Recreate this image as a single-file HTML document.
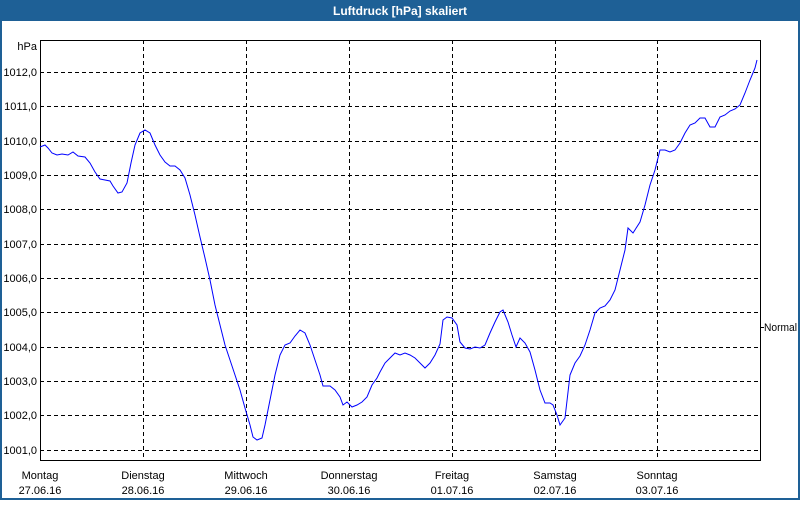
<!DOCTYPE html>
<html><head><style>
body{margin:0;width:800px;height:500px;overflow:hidden;background:#fff;font-family:"Liberation Sans","DejaVu Sans",sans-serif;}
</style></head><body>
<svg width="800" height="500" xmlns="http://www.w3.org/2000/svg" font-family="Liberation Sans, DejaVu Sans, sans-serif" font-size="11">
<rect x="0" y="0" width="800" height="500" fill="#fff"/>
<rect x="0" y="0" width="800" height="21" fill="#1e6096"/>
<rect x="0" y="0" width="2" height="500" fill="#1e6096"/>
<rect x="798" y="0" width="2" height="500" fill="#1e6096"/>
<rect x="0" y="498" width="800" height="2" fill="#1e6096"/>
<text x="400" y="15" fill="#fff" font-weight="bold" font-size="12" text-anchor="middle">Luftdruck [hPa] skaliert</text>
<g stroke="#000" stroke-dasharray="4,3" stroke-width="1">
<line x1="40" x2="760" y1="72.5" y2="72.5"/><line x1="40" x2="760" y1="106.5" y2="106.5"/>
<line x1="40" x2="760" y1="141.5" y2="141.5"/><line x1="40" x2="760" y1="175.5" y2="175.5"/>
<line x1="40" x2="760" y1="209.5" y2="209.5"/><line x1="40" x2="760" y1="244.5" y2="244.5"/>
<line x1="40" x2="760" y1="278.5" y2="278.5"/><line x1="40" x2="760" y1="312.5" y2="312.5"/>
<line x1="40" x2="760" y1="347.5" y2="347.5"/><line x1="40" x2="760" y1="381.5" y2="381.5"/>
<line x1="40" x2="760" y1="415.5" y2="415.5"/><line x1="40" x2="760" y1="450.5" y2="450.5"/>
<line x1="143.5" x2="143.5" y1="40" y2="460"/><line x1="246.5" x2="246.5" y1="40" y2="460"/>
<line x1="349.5" x2="349.5" y1="40" y2="460"/><line x1="452.5" x2="452.5" y1="40" y2="460"/>
<line x1="555.5" x2="555.5" y1="40" y2="460"/><line x1="657.5" x2="657.5" y1="40" y2="460"/>
</g>
<rect x="40.5" y="40.5" width="720" height="420" fill="none" stroke="#000"/>
<line x1="760" x2="764" y1="327.5" y2="327.5" stroke="#000"/>
<g fill="#000" text-anchor="end">
<text x="37" y="50">hPa</text>
<text x="37" y="76">1012,0</text><text x="37" y="110">1011,0</text><text x="37" y="145">1010,0</text>
<text x="37" y="179">1009,0</text><text x="37" y="213">1008,0</text><text x="37" y="248">1007,0</text>
<text x="37" y="282">1006,0</text><text x="37" y="316">1005,0</text><text x="37" y="351">1004,0</text>
<text x="37" y="385">1003,0</text><text x="37" y="419">1002,0</text><text x="37" y="454">1001,0</text>
</g>
<text x="764" y="331" fill="#000" textLength="33" lengthAdjust="spacingAndGlyphs">Normal</text>
<g fill="#000" text-anchor="middle">
<text x="40" y="479">Montag</text><text x="40" y="494">27.06.16</text>
<text x="143" y="479">Dienstag</text><text x="143" y="494">28.06.16</text>
<text x="246" y="479">Mittwoch</text><text x="246" y="494">29.06.16</text>
<text x="349" y="479">Donnerstag</text><text x="349" y="494">30.06.16</text>
<text x="452" y="479">Freitag</text><text x="452" y="494">01.07.16</text>
<text x="555" y="479">Samstag</text><text x="555" y="494">02.07.16</text>
<text x="657" y="479">Sonntag</text><text x="657" y="494">03.07.16</text>
</g>
<polyline fill="none" stroke="#0000ff" stroke-width="1" points="40,147 45,145 48,148 52,153 57,155 62,154 68,155 73,152 78,156 85,157 90,163 95,172 100,179 105,180 110,181 113,186 118,193 122,192 127,183 131,163 135,145 140,133 145,130 150,133 155,145 160,155 165,162 170,166 175,166 180,170 185,178 190,195 195,215 200,237 205,258 210,280 215,305 220,325 225,345 230,360 235,375 240,390 245,408 250,425 253,437 257,440 262,438 265,425 270,400 275,375 280,355 285,345 290,343 295,336 300,330 305,333 310,345 315,360 320,375 323,386 330,386 335,390 340,397 343,405 347,402 352,407 357,405 362,402 367,397 372,385 377,378 380,372 385,363 390,358 395,353 400,355 405,353 410,355 415,358 420,363 425,368 430,363 435,355 440,344 443,320 447,317 452,318 457,325 460,342 465,348 470,349 475,347 480,348 485,345 490,333 495,322 500,312 503,310 508,322 512,335 516,347 520,338 525,343 530,352 535,370 540,390 545,403 550,403 553,405 557,415 560,425 565,418 570,375 575,363 580,356 585,345 590,330 595,313 600,308 605,306 610,300 615,290 620,270 625,250 628,228 633,233 640,222 645,205 650,185 655,170 660,150 665,150 670,152 675,150 680,143 685,133 690,125 695,123 700,118 705,118 710,127 715,127 720,117 725,115 730,111 735,109 740,105 745,93 750,80 755,68 757,60"/>
</svg>
</body></html>
